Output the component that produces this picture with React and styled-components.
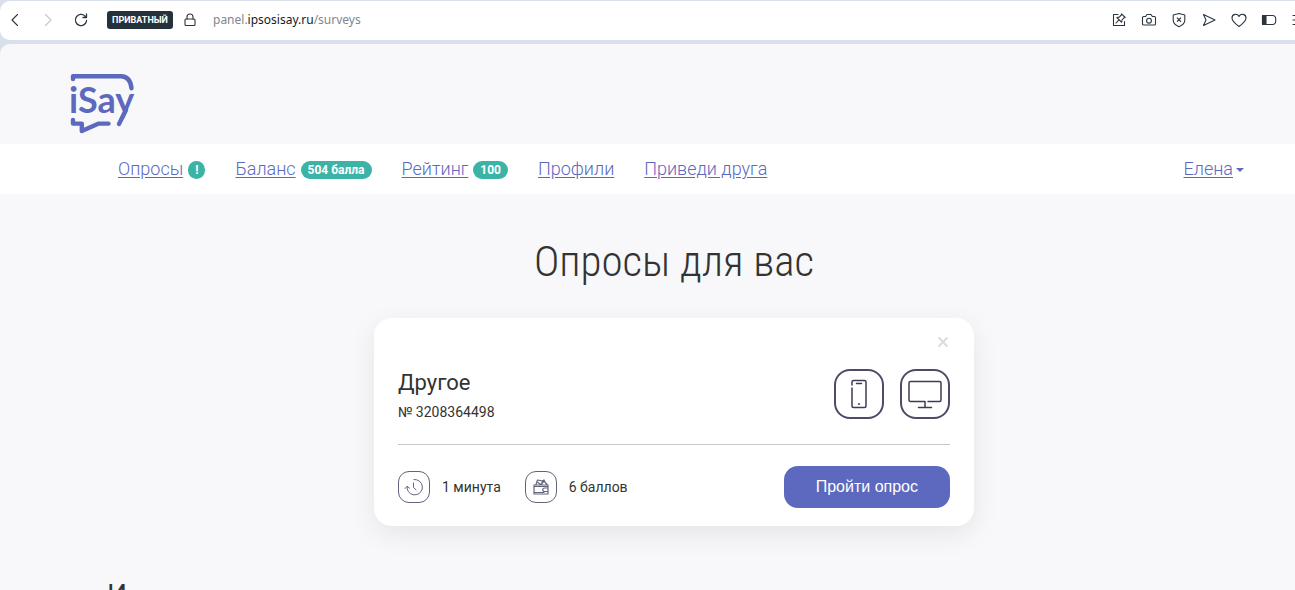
import React from "react";
import styled, { createGlobalStyle } from "styled-components";

const GlobalStyle = createGlobalStyle`
  * { box-sizing: border-box; }
  body { margin: 0; background: #d9e0ec; color: #333; font-family: Roboto, "Liberation Sans", sans-serif; }
  button { font: inherit; cursor: pointer; }
`;

const Shell = styled.div`
  display: flex;
  flex-direction: column;
  height: 100vh;
  padding-top: 1px;
  gap: 4px;
  overflow: hidden;
`;

const Toolbar = styled.header`
  display: flex;
  flex: none;
  align-items: center;
  height: 39px;
  padding-bottom: 1px;
  background: #fff;
  border-radius: 10px 0 0 10px;
  overflow: hidden;
`;

const ToolGroup = styled.div`
  display: flex;
  flex: none;
  gap: ${(p) => p.$gap}px;
  padding-left: ${(p) => p.$pad || 0}px;
  margin-right: ${(p) => p.$bleed || 0}px;
`;

const ToolButton = styled.button`
  display: flex;
  flex: none;
  padding: 0;
  border: 0;
  background: none;
  color: ${(p) => (p.disabled ? "#c4c7ca" : "#2b3640")};
`;

const PrivateTag = styled.span`
  margin: 0 9px 0 18px;
  width: 66px;
  text-align: center;
  background: #26323b;
  border-radius: 3px;
  color: #fff;
  font: 700 9px/18px Roboto, sans-serif;
`;

const Address = styled.div`
  flex: 1;
  padding-left: 15px;
  color: #7d8790;
  font: 12px/18px "Noto Sans", sans-serif;
  b { font-weight: 400; color: #16191c; }
`;

const Viewport = styled.div`
  flex: 1;
  min-height: 0;
  overflow: hidden;
  background: #f8f8fa;
  border-radius: 10px 0 0 0;
`;

const Brand = styled.div`
  height: 100px;
  padding: 28px 68px 0;
`;

const Nav = styled.nav`
  display: flex;
  gap: 30px;
  height: 50px;
  padding: 0 51px 0 118px;
  background: #fff;
  line-height: 50px;
`;

const NavItem = styled.div`
  display: flex;
  align-items: center;
  gap: 5px;
  &:last-child { margin-left: auto; gap: 3px; }
`;

const NavLink = styled.a`
  color: #5c69be;
  font-size: 18px;
  font-weight: 300;
  text-underline-offset: 2px;
`;

const Badge = styled.span`
  margin-top: 2px;
  padding: 0 7px;
  border-radius: 9px;
  background: #3bb3a7;
  color: #fff;
  font-size: 12px;
  font-weight: 700;
  line-height: 18px;
`;

const Caret = styled.span`
  margin-top: 2px;
  border: 4px solid transparent;
  border-top-color: #5c69be;
  border-bottom: 0;
`;

const Content = styled.main`
  padding: 42px 0 0 53px;
`;

const Title = styled.h1`
  margin: 0 0 32px;
  text-align: center;
  font: 300 43px/50px "Roboto Condensed", Roboto, sans-serif;
`;

const Card = styled.article`
  max-width: 600px;
  margin: 0 auto;
  padding: 16px 24px 18px;
  background: #fff;
  border-radius: 18px;
  box-shadow: 0 8px 28px rgba(0, 0, 0, 0.08);
`;

const CloseButton = styled.button`
  display: flex;
  margin-left: auto;
  padding: 0;
  border: 0;
  background: none;
  color: #dcdcde;
`;

const Row = styled.div`
  display: flex;
  align-items: center;
  justify-content: space-between;
`;

const Summary = styled(Row)`
  align-items: flex-start;
  padding: 19px 0 22px;
  border-bottom: 1px solid #c9c9cc;
`;

const Footer = styled(Row)`
  padding-top: 21px;
`;

const SurveyName = styled.h2`
  margin: 0;
  font-size: 22px;
  font-weight: 400;
  line-height: 28px;
`;

const SurveyId = styled.p`
  margin: 5px 0 0;
  font-size: 14px;
  line-height: 20px;
`;

const Group = styled.div`
  display: flex;
  gap: ${(p) => p.$gap}px;
`;

const Frame = styled.span`
  display: grid;
  place-items: center;
  width: ${(p) => p.$size}px;
  height: ${(p) => p.$size}px;
  border: ${(p) => (p.$size > 40 ? "2px solid #4c4c68" : "1px solid #62647c")};
  border-radius: ${(p) => (p.$size > 40 ? 16 : 11)}px;
`;

const Fact = styled.div`
  display: flex;
  align-items: center;
  gap: 12px;
  font-size: 14px;
  line-height: 20px;
`;

const StartButton = styled.button`
  height: 42px;
  padding: 0 32px;
  border: 0;
  border-radius: 14px;
  background: #5c69be;
  color: #fff;
  font-family: "Liberation Sans", Arial, sans-serif;
  font-size: 16px;
`;

const NextHeading = styled.h2`
  margin: 51px 0 0 54px;
  font-size: 28px;
  font-weight: 400;
  line-height: 36px;
`;

const Icon = ({ size = 16, children, ...rest }) => (
  <svg width={size} height={size} viewBox={`0 0 ${size} ${size}`} fill="none" stroke="currentColor" strokeWidth="1.1" strokeLinecap="round" strokeLinejoin="round" aria-hidden="true" {...rest}>
    {children}
  </svg>
);

const toolIcons = [
  ["Заметка", <><path d="M7 2.500H2.500v11h11V9.500" /><path d="m10.500 1.800 3.700 3.700-1.200.3-2 2.200-.3 2.300-4.800-4.800 2.300-.4 2.100-2.100ZM7.500 8.300 5 11" /></>],
  ["Снимок", <><path d="M2.600 4.500h2L6 2.500h4l1.400 2h2c.7 0 1.100.4 1.100 1.100v6.300c0 .7-.4 1.100-1.100 1.100H2.600c-.7 0-1.100-.4-1.100-1.100V5.600c0-.7.4-1.100 1.100-1.100Z" /><circle cx="8" cy="8.700" r="2.400" /></>],
  ["Защита", <><path d="M8 1.500 13.800 3v5.200c0 3-2.300 5-5.800 6.600C4.500 13.200 2.200 11.200 2.200 8.200V3Z" /><path d="m6.300 6 3.400 3.400M9.700 6 6.300 9.400" /></>],
  ["Отправить", <path d="M2.500 2.500 14 8 2.500 13.500 5 8Z" />],
  ["Избранное", <path d="M8 14.500C4 11.500 1 8.900 1 5.900c0-4 5.300-5 7-1.500C9.700.900 15 1.900 15 5.900c0 3-3 5.600-7 8.600Z" />],
  ["Батарея", <><path d="M1.500 3.500h10.200a3 3 0 0 1 3 3v3a3 3 0 0 1-3 3H1.500Z" /><path d="M1.500 3.500H5v9H1.500Z" fill="currentColor" /></>],
  ["Меню", <path d="M2 3.500h12M2 8h12M2 12.500h12" />],
];

function Logo() {
  return (
    <svg width="68" height="64" viewBox="0 0 68 64" fill="none" stroke="#5c69be" strokeWidth="4.400" strokeLinecap="round" strokeLinejoin="round" role="img" aria-label="iSay">
      <path d="M5 7V4.200H53q9.500.500 10.500 12" />
      <path d="M5 48v3.600h8.800V59l17-7.400h9.700" />
      <path d="m58 38-7 14" />
      <text x="1" y="41" fill="#5c69be" stroke="none" fontFamily="Lato, sans-serif" fontSize="36" fontWeight="700">iSay</text>
    </svg>
  );
}

const links = [
  ["Опросы", "!"],
  ["Баланс", "504 балла"],
  ["Рейтинг", "100"],
  ["Профили"],
  ["Приведи друга"],
];

export default function App() {
  return (
    <>
      <GlobalStyle />
      <Shell>
        <Toolbar>
          <ToolGroup $gap={17} $pad={7}>
            <ToolButton aria-label="Назад"><Icon><path d="m10.500 2.500-5.500 5.500 5.500 5.500" /></Icon></ToolButton>
            <ToolButton aria-label="Вперёд" disabled><Icon><path d="m5.500 2.500 5.500 5.500-5.500 5.500" /></Icon></ToolButton>
            <ToolButton aria-label="Обновить"><Icon strokeWidth="1.300"><path d="M13.600 8.300A5.600 5.600 0 1 1 12 4.100l1.400 1.300M13.500 2v3.500H10" /></Icon></ToolButton>
          </ToolGroup>
          <PrivateTag>ПРИВАТНЫЙ</PrivateTag>
          <Icon><rect x="3" y="7" width="10" height="6.500" rx="1" /><path d="M5 7V5a3 3 0 0 1 6 0v2" /></Icon>
          <Address>panel.<b>ipsosisay.ru</b>/surveys</Address>
          <ToolGroup $gap={14} $bleed={-12}>
            {toolIcons.map(([name, shape]) => (
              <ToolButton key={name} aria-label={name}><Icon>{shape}</Icon></ToolButton>
            ))}
          </ToolGroup>
        </Toolbar>
        <Viewport>
          <Brand><Logo /></Brand>
          <Nav>
            {links.map(([label, badge]) => (
              <NavItem key={label}>
                <NavLink href="#">{label}</NavLink>
                {badge && <Badge>{badge}</Badge>}
              </NavItem>
            ))}
            <NavItem><NavLink href="#">Елена</NavLink><Caret /></NavItem>
          </Nav>
          <Content>
            <Title>Опросы для вас</Title>
            <Card>
              <CloseButton aria-label="Закрыть"><Icon strokeWidth="2" strokeLinecap="butt"><path d="m4.500 3.500 9 9M13.500 3.500l-9 9" /></Icon></CloseButton>
              <Summary>
                <div>
                  <SurveyName>Другое</SurveyName>
                  <SurveyId>№ 3208364498</SurveyId>
                </div>
                <Group $gap={16}>
                  <Frame $size={50}>
                    <Icon size={34} stroke="#3c3c58" strokeWidth="1.500">
                      <path d="M10 8V5q0-1.500 1.500-1.500h11Q24 3.500 24 5v24q0 1.500-1.500 1.500h-11Q10 30.500 10 29V11M14.500 6.500h5M16.500 27h1" />
                    </Icon>
                  </Frame>
                  <Frame $size={50}>
                    <Icon size={34} stroke="#3c3c58" strokeWidth="1.500">
                      <path d="M20 24.500h11.500q1.500 0 1.500-1.500V6q0-1.500-1.500-1.500h-29Q1 4.500 1 6v17q0 1.500 1.500 1.500H17v5.500M10.500 30.500h13" />
                    </Icon>
                  </Frame>
                </Group>
              </Summary>
              <Footer>
                <Group $gap={24}>
                  <Fact>
                    <Frame $size={32}>
                      <Icon size={20} stroke="#62647c" strokeWidth="1">
                        <path d="M10 2.500A7.700 7.700 0 1 1 3.200 12V9.500M1 11.500l2.200-2.200 2.300 1.800M9.500 6v4.500l2.500 2.300" />
                      </Icon>
                    </Frame>
                    1 минута
                  </Fact>
                  <Fact>
                    <Frame $size={32}>
                      <Icon size={20} stroke="#62647c" strokeWidth="1.200">
                        <path d="M3 8h14v9H3ZM3 9.500h14M17 11h-3.500a1.500 1.500 0 0 0 0 3.500H17M3.500 15.500H13M5 7.500 6.500 3l5 1-1 3.500M10 7.500 13 4l3 3.500M7 5.500l2 1.500M11 4l2-1 1 2" />
                      </Icon>
                    </Frame>
                    6 баллов
                  </Fact>
                </Group>
                <StartButton>Пройти опрос</StartButton>
              </Footer>
            </Card>
            <NextHeading>И</NextHeading>
          </Content>
        </Viewport>
      </Shell>
    </>
  );
}
